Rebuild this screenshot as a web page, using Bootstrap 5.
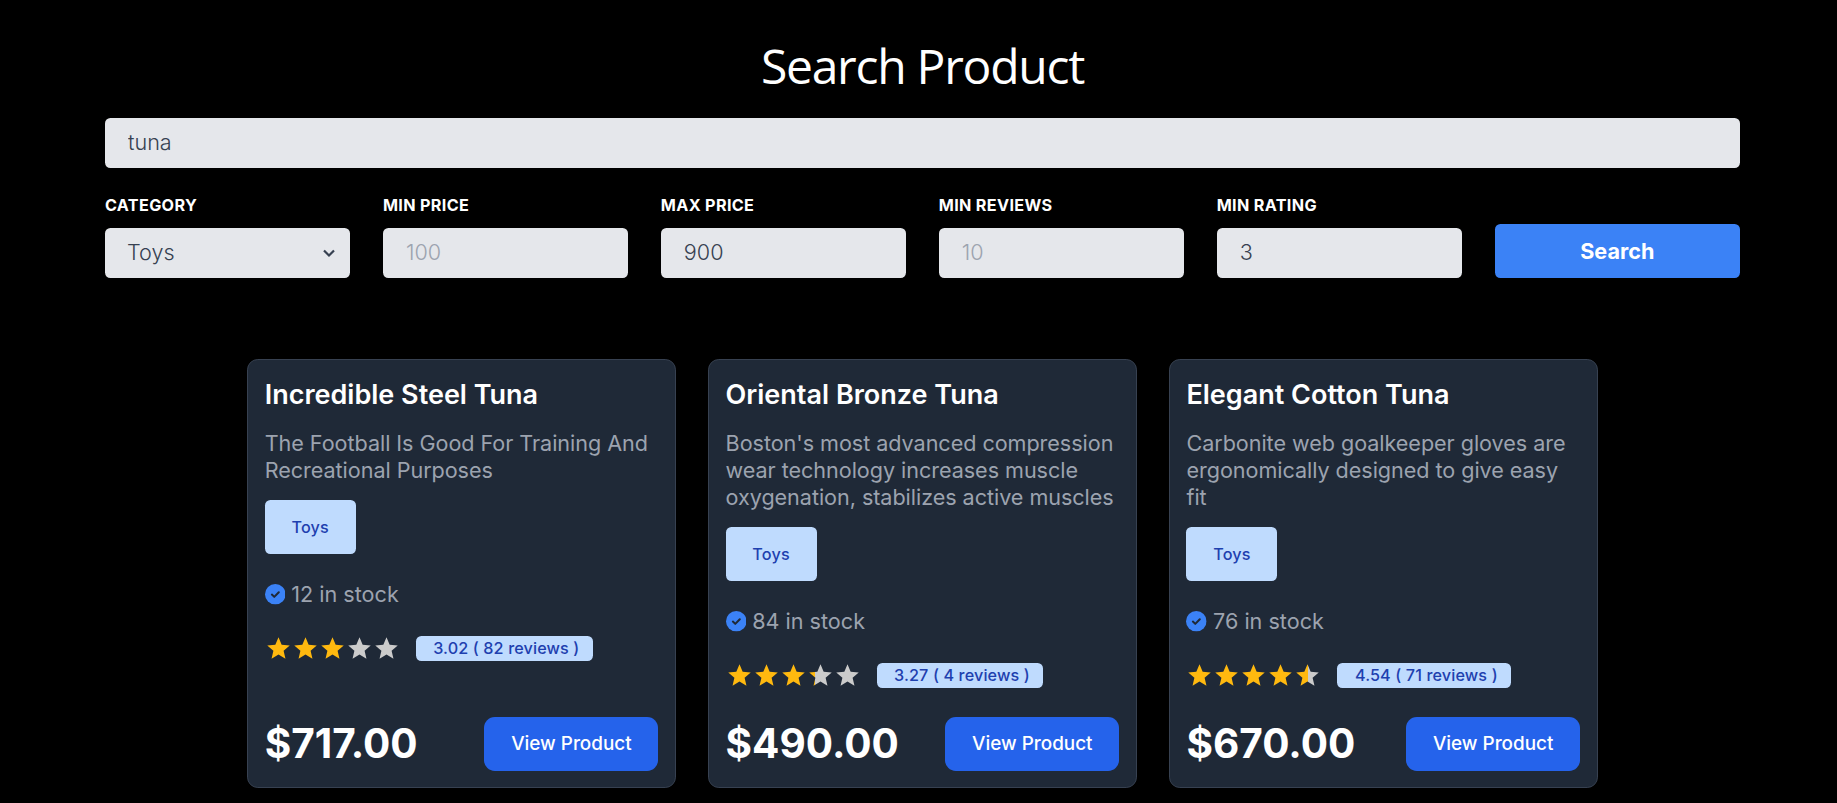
<!DOCTYPE html>
<html lang="en">
<head>
<meta charset="utf-8">
<meta name="viewport" content="width=device-width, initial-scale=1">
<title>Search Product</title>
<link href="https://cdn.jsdelivr.net/npm/bootstrap@5.3.0/dist/css/bootstrap.min.css" rel="stylesheet">
<style>
body { background:#000; font-family:Inter,"Liberation Sans",sans-serif; font-size:21.6px; line-height:27px; font-weight:300; color:#9ca3af; overflow:hidden; }
.page { padding:31px 97px 0 105px; }
h1 { font-family:"Open Sans","Noto Sans",sans-serif; font-size:48px; line-height:70px; font-weight:400; color:#fff; letter-spacing:-1.25px; margin:0 0 17px; }
.search-form .form-control, .search-form .form-select { height:50px; border:0; border-radius:5.4px; background-color:#e5e7eb; color:#374151; font-size:21.6px; font-weight:300; line-height:27px; padding:10px 23px 12px; box-shadow:none; }
.search-form .form-select { padding-left:22px; }
.search-form .form-control::placeholder { color:#9ca3af; opacity:1; }
.search-form .form-select { background-image:none; }
.filters { display:grid; grid-template-columns:repeat(6,1fr); column-gap:32.5px; margin-top:24px; }
.filters label { display:block; font-size:16.2px; line-height:26px; font-weight:700; color:#fff; text-transform:uppercase; letter-spacing:.33px; margin-bottom:10px; }
.chevron { right:13px; top:17px; width:16px; height:16px; pointer-events:none; }
.btn-search { height:54px; border:0; border-radius:5.4px; background:#3b82f6; color:#fff; font-size:21.6px; font-weight:700; line-height:27px; padding:0; }
.products { display:grid; grid-template-columns:repeat(3,428.7px); column-gap:32.2px; margin:81px 0 0 142.3px; }
.product { height:429px; border:1px solid #374151; border-radius:10.8px; background:#1f2937; color:#9ca3af; padding:16px 16.6px 16.5px 16.4px; font-weight:400; }
.product h2 { font-size:27px; line-height:38px; font-weight:600; color:#fff; margin:0 0 16px; }
.product p { margin:0 0 16px; letter-spacing:-.05px; }
.tag { height:54px; width:91px; border-radius:5.4px; background:#bfdbfe; color:#1e40af; font-size:16.2px; font-weight:500; letter-spacing:.15px; }
.stock { margin-top:27px; height:27px; }
.stock svg { width:20.6px; height:20.6px; margin-right:6px; }
.rating { margin-top:27px; height:27px; }
.rating svg { width:27px; height:27px; flex:none; }
.score { height:25px; line-height:25px; margin-left:16px; padding:0 13.5px 0 17.5px; border-radius:5.4px; background:#bfdbfe; color:#1e40af; font-size:16.2px; font-weight:500; letter-spacing:.12px; white-space:pre; }
.price { font-size:40.5px; line-height:54px; font-weight:700; color:#fff; }
.btn-view { height:54px; width:174px; border:0; border-radius:10.8px; background:#2563eb; color:#fff; font-size:18.9px; line-height:27px; font-weight:500; padding:0 0 1px; }
</style>
</head>
<body>
<svg class="position-absolute" width="0" height="0" aria-hidden="true">
  <defs>
    <linearGradient id="p27"><stop offset="27%" stop-color="#ffb90f"/><stop offset="27%" stop-color="#cbcbcb"/></linearGradient>
    <linearGradient id="p54"><stop offset="54%" stop-color="#ffb90f"/><stop offset="54%" stop-color="#cbcbcb"/></linearGradient>
  </defs>
  <symbol id="star" viewBox="0 0 24 24"><path d="M12 17.27 18.18 21l-1.64-7.03L22 9.24l-7.19-.61L12 2 9.19 8.63 2 9.24l5.46 4.73L5.82 21z"/></symbol>
  <symbol id="check" viewBox="0 0 20 20"><circle cx="10" cy="10" r="10" fill="#3b82f6"/><path d="M6.7 10.3 9 12.5 13.4 8.1" fill="none" stroke="#1f2937" stroke-width="2" stroke-linecap="round" stroke-linejoin="round"/></symbol>
</svg>
<main class="page">
  <h1 class="text-center">Search Product</h1>
  <form class="search-form">
    <input class="form-control" type="text" value="tuna" aria-label="Search">
    <div class="filters align-items-end">
      <div>
        <label for="cat">Category</label>
        <div class="position-relative">
          <select class="form-select" id="cat"><option>Toys</option></select>
          <svg class="chevron position-absolute" viewBox="0 0 16 16" fill="none" stroke="#374151" stroke-width="2.2"><path d="M3 5.5 8 10.5 13 5.5"/></svg>
        </div>
      </div>
      <div><label for="minp">Min price</label><input class="form-control" id="minp" placeholder="100"></div>
      <div><label for="maxp">Max price</label><input class="form-control" id="maxp" value="900"></div>
      <div><label for="minr">Min reviews</label><input class="form-control" id="minr" placeholder="10"></div>
      <div><label for="rate">Min rating</label><input class="form-control" id="rate" value="3"></div>
      <button class="btn btn-search w-100" type="button">Search</button>
    </div>
  </form>
  <section class="products">
    <article class="product d-flex flex-column">
      <h2>Incredible Steel Tuna</h2>
      <p>The Football Is Good For Training And Recreational Purposes</p>
      <span class="tag d-inline-flex align-items-center justify-content-center align-self-start">Toys</span>
      <div class="stock d-flex align-items-center"><svg><use href="#check"/></svg>12 in stock</div>
      <div class="rating d-flex align-items-center">
        <svg fill="#ffb90f"><use href="#star"/></svg><svg fill="#ffb90f"><use href="#star"/></svg><svg fill="#ffb90f"><use href="#star"/></svg><svg fill="#cbcbcb"><use href="#star"/></svg><svg fill="#cbcbcb"><use href="#star"/></svg>
        <span class="score">3.02 ( 82 reviews )</span>
      </div>
      <div class="d-flex justify-content-between align-items-center mt-auto"><span class="price">$717.00</span><a class="btn btn-view d-flex align-items-center justify-content-center" href="#">View Product</a></div>
    </article>
    <article class="product d-flex flex-column">
      <h2>Oriental Bronze Tuna</h2>
      <p>Boston's most advanced compression wear technology increases muscle oxygenation, stabilizes active muscles</p>
      <span class="tag d-inline-flex align-items-center justify-content-center align-self-start">Toys</span>
      <div class="stock d-flex align-items-center"><svg><use href="#check"/></svg>84 in stock</div>
      <div class="rating d-flex align-items-center">
        <svg fill="#ffb90f"><use href="#star"/></svg><svg fill="#ffb90f"><use href="#star"/></svg><svg fill="#ffb90f"><use href="#star"/></svg><svg fill="url(#p27)"><use href="#star"/></svg><svg fill="#cbcbcb"><use href="#star"/></svg>
        <span class="score">3.27 ( 4 reviews )</span>
      </div>
      <div class="d-flex justify-content-between align-items-center mt-auto"><span class="price">$490.00</span><a class="btn btn-view d-flex align-items-center justify-content-center" href="#">View Product</a></div>
    </article>
    <article class="product d-flex flex-column">
      <h2>Elegant Cotton Tuna</h2>
      <p>Carbonite web goalkeeper gloves are ergonomically designed to give easy fit</p>
      <span class="tag d-inline-flex align-items-center justify-content-center align-self-start">Toys</span>
      <div class="stock d-flex align-items-center"><svg><use href="#check"/></svg>76 in stock</div>
      <div class="rating d-flex align-items-center">
        <svg fill="#ffb90f"><use href="#star"/></svg><svg fill="#ffb90f"><use href="#star"/></svg><svg fill="#ffb90f"><use href="#star"/></svg><svg fill="#ffb90f"><use href="#star"/></svg><svg fill="url(#p54)"><use href="#star"/></svg>
        <span class="score">4.54 ( 71 reviews )</span>
      </div>
      <div class="d-flex justify-content-between align-items-center mt-auto"><span class="price">$670.00</span><a class="btn btn-view d-flex align-items-center justify-content-center" href="#">View Product</a></div>
    </article>
  </section>
</main>
<script src="https://cdn.jsdelivr.net/npm/bootstrap@5.3.0/dist/js/bootstrap.bundle.min.js"></script>
</body>
</html>
